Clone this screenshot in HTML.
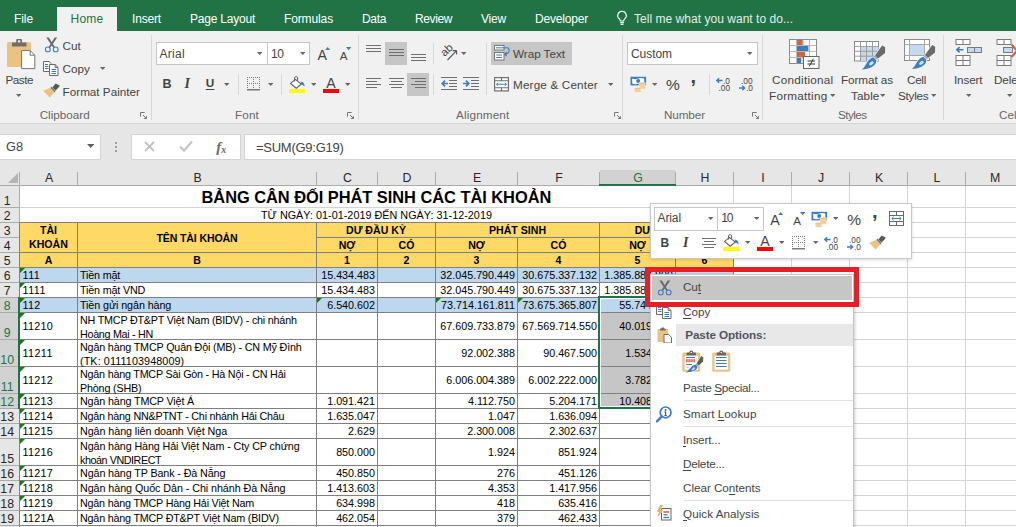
<!DOCTYPE html>
<html><head><meta charset="utf-8"><title>Excel</title>
<style>
html,body{margin:0;padding:0;}
body{width:1016px;height:527px;overflow:hidden;position:relative;background:#fff;font-family:"Liberation Sans",sans-serif;}
.t{position:absolute;white-space:nowrap;}
.r{position:absolute;}
u{text-decoration:underline;text-underline-offset:1.6px;}
</style></head><body>
<div class="r" style="left:0.00px;top:0.00px;width:1016.00px;height:31.00px;background:#217346;"></div>
<div class="r" style="left:0.00px;top:31.00px;width:1016.00px;height:92.00px;background:#f1f1f1;"></div>
<div class="r" style="left:0.00px;top:123.00px;width:1016.00px;height:1.00px;background:#d5d5d5;"></div>
<div class="r" style="left:0.00px;top:124.00px;width:1016.00px;height:46.00px;background:#e6e6e6;"></div>
<div class="r" style="left:57.00px;top:7.00px;width:60.00px;height:25.00px;background:#f1f1f1;"></div>
<div class="t" style="left:14.00px;top:12.84px;font-size:12.00px;line-height:1;color:#fff;letter-spacing:-0.084px;">File</div>
<div class="t" style="left:70.50px;top:12.84px;font-size:12.00px;line-height:1;color:#217346;letter-spacing:0.248px;">Home</div>
<div class="t" style="left:132.00px;top:12.84px;font-size:12.00px;line-height:1;color:#fff;letter-spacing:-0.168px;">Insert</div>
<div class="t" style="left:190.00px;top:12.84px;font-size:12.00px;line-height:1;color:#fff;letter-spacing:-0.217px;">Page Layout</div>
<div class="t" style="left:284.00px;top:12.84px;font-size:12.00px;line-height:1;color:#fff;letter-spacing:-0.126px;">Formulas</div>
<div class="t" style="left:362.00px;top:12.84px;font-size:12.00px;line-height:1;color:#fff;letter-spacing:-0.337px;">Data</div>
<div class="t" style="left:415.00px;top:12.84px;font-size:12.00px;line-height:1;color:#fff;letter-spacing:-0.391px;">Review</div>
<div class="t" style="left:481.00px;top:12.84px;font-size:12.00px;line-height:1;color:#fff;letter-spacing:-0.198px;">View</div>
<div class="t" style="left:535.00px;top:12.84px;font-size:12.00px;line-height:1;color:#fff;letter-spacing:-0.188px;">Developer</div>
<div class="t" style="left:634.00px;top:12.84px;font-size:12.00px;line-height:1;color:#e3eee8;letter-spacing:0.031px;">Tell me what you want to do...</div>
<svg class="r" style="left:616.00px;top:10.00px;" width="12" height="17" viewBox="0 0 12 17"><path d="M6 1.2a4.3 4.3 0 0 0-2.6 7.7c.6.6.9 1.3.9 2.1h3.4c0-.8.3-1.5.9-2.1A4.3 4.3 0 0 0 6 1.2z" fill="none" stroke="#fff" stroke-width="1.1"/><path d="M4.2 12.6h3.6M4.6 14.4h2.8" stroke="#fff" stroke-width="1.1"/></svg>
<svg class="r" style="left:6.00px;top:38.00px;" width="30" height="32" viewBox="0 0 30 32"><rect x="1" y="4" width="24" height="25" rx="1.6" fill="#eac282"/>
<path d="M6 8.4V5.2a.8.8 0 0 1 .8-.8h3.4V2a.9.9 0 0 1 .9-.9h4a.9.9 0 0 1 .9.9v2.4h3.7a.8.8 0 0 1 .8.8v3.2z" fill="#6e6e6e"/><rect x="12" y="2.4" width="2.3" height="2" fill="#f4f4f4"/>
<path d="M15.6 12.6h8.6l4.6 4.6v13.4H15.6z" fill="#fff" stroke="#757575" stroke-width="1"/><path d="M24.2 12.6v4.6h4.6" fill="none" stroke="#757575" stroke-width="1"/></svg>
<div class="t" style="left:5.40px;top:73.60px;font-size:11.70px;line-height:1;color:#444;letter-spacing:-0.463px;">Paste</div>
<svg class="r" style="left:15.85px;top:93.50px;" width="5.5" height="3" viewBox="0 0 5.5 3"><path d="M0 0H5.5 L2.75 3Z" fill="#666"/></svg>
<svg class="r" style="left:43.50px;top:37.00px;" width="15.5" height="16" viewBox="0 0 15.5 16"><path d="M2.3 .5H4.9L8.6 6.6L10.9 10.1L9.6 10.9L7 7.6z" fill="#6b6b6b"/><path d="M13.2 .5H10.6L6.9 6.6L4.6 10.1L5.9 10.9L8.5 7.6z" fill="#6b6b6b"/>
<circle cx="3.8" cy="12.4" r="2.4" fill="none" stroke="#3b7dc4" stroke-width="1.1"/><circle cx="11.7" cy="12.4" r="2.4" fill="none" stroke="#3b7dc4" stroke-width="1.1"/></svg>
<div class="t" style="left:62.60px;top:39.70px;font-size:11.70px;line-height:1;color:#444;letter-spacing:-0.069px;">Cut</div>
<svg class="r" style="left:42.80px;top:60.50px;" width="16" height="15" viewBox="0 0 16 15"><path d="M0.5 0.5h5.6l2.4 2.4v7.6h-8z" fill="#fff" stroke="#6a6a6a" stroke-width="1"/>
<path d="M2 3.5h3M2 5.5h3.5M2 7.5h3.5" stroke="#3b7dc4" stroke-width="1"/>
<path d="M6.5 3.5h5.6l2.9 2.9v8.1h-8.5z" fill="#fff" stroke="#6a6a6a" stroke-width="1"/><path d="M12.1 3.5v2.9h2.9" fill="none" stroke="#6a6a6a" stroke-width="1"/>
<path d="M8.5 8.5h4.5M8.5 10.5h4.5M8.5 12.5h4.5" stroke="#3b7dc4" stroke-width="1"/></svg>
<div class="t" style="left:62.60px;top:62.90px;font-size:11.70px;line-height:1;color:#444;letter-spacing:-0.028px;">Copy</div>
<svg class="r" style="left:99.65px;top:66.80px;" width="5.5" height="3" viewBox="0 0 5.5 3"><path d="M0 0H5.5 L2.75 3Z" fill="#666"/></svg>
<svg class="r" style="left:43.00px;top:83.30px;" width="17" height="15" viewBox="0 0 17 15"><path d="M12.6 .6L16.6 2.4L16.2 3.8L12.6 7.6L9.4 4.4z" fill="#595959"/>
<path d="M8.6 3.6L12.8 8L11.4 9.4L7.2 5z" fill="#7e7e7e"/>
<path d="M7 5L11.2 9.4L6.7 14.4L0.2 7.7z" fill="#eac282"/></svg>
<div class="t" style="left:62.60px;top:85.50px;font-size:11.70px;line-height:1;color:#444;letter-spacing:0.002px;">Format Painter</div>
<div class="t" style="left:39.70px;top:108.70px;font-size:11.70px;line-height:1;color:#666;letter-spacing:-0.008px;">Clipboard</div>
<svg class="r" style="left:140.00px;top:111.80px;" width="8" height="8" viewBox="0 0 8 8"><path d="M0.5 4.6V0.5H4.6" fill="none" stroke="#777" stroke-width="1"/><path d="M3 3L6.3 6.3" fill="none" stroke="#777" stroke-width="1"/><path d="M6.9 3.6V6.9H3.6z" fill="#777"/></svg>
<div class="r" style="left:151.00px;top:35.00px;width:1.00px;height:85.00px;background:#d8d8d8;"></div>
<div class="r" style="left:156.00px;top:42.00px;width:111.50px;height:23.00px;background:#fff;box-sizing:border-box;border:1px solid #c6c6c6;"></div>
<div class="r" style="left:266.50px;top:42.00px;width:43.00px;height:23.00px;background:#fff;box-sizing:border-box;border:1px solid #c6c6c6;"></div>
<div class="t" style="left:159.50px;top:48.14px;font-size:12.00px;line-height:1;color:#444;letter-spacing:0.299px;">Arial</div>
<div class="t" style="left:271.00px;top:48.14px;font-size:12.00px;line-height:1;color:#444;letter-spacing:-0.423px;">10</div>
<svg class="r" style="left:256.75px;top:52.30px;" width="5.5" height="3" viewBox="0 0 5.5 3"><path d="M0 0H5.5 L2.75 3Z" fill="#666"/></svg>
<svg class="r" style="left:299.75px;top:52.30px;" width="5.5" height="3" viewBox="0 0 5.5 3"><path d="M0 0H5.5 L2.75 3Z" fill="#666"/></svg>
<div class="t" style="left:317.50px;top:47.98px;font-size:14.20px;line-height:1;color:#444;">A</div>
<svg class="r" style="left:325.10px;top:47.00px;" width="5.4" height="3.2" viewBox="0 0 5.4 3.2"><path d="M0 3.2L2.7 0L5.4 3.2z" fill="#3b7dc4"/></svg>
<div class="t" style="left:339.80px;top:50.18px;font-size:11.60px;line-height:1;color:#444;">A</div>
<svg class="r" style="left:346.40px;top:47.00px;" width="5.4" height="3.2" viewBox="0 0 5.4 3.2"><path d="M0 0H5.4L2.7 3.2z" fill="#3b7dc4"/></svg>
<div class="t" style="left:162.50px;top:78.42px;font-size:12.50px;line-height:1;color:#444;font-weight:bold;">B</div>
<div class="t" style="left:184.50px;top:77.15px;font-size:14.00px;line-height:1;color:#444;font-weight:bold;font-style:italic;font-family:'Liberation Serif',serif;">I</div>
<div class="t" style="left:205.80px;top:78.31px;font-size:11.80px;line-height:1;color:#444;font-weight:bold;text-decoration:underline;text-underline-offset:1.5px;">U</div>
<svg class="r" style="left:224.25px;top:83.00px;" width="5.5" height="3" viewBox="0 0 5.5 3"><path d="M0 0H5.5 L2.75 3Z" fill="#666"/></svg>
<div class="r" style="left:238.00px;top:74.00px;width:1.00px;height:21.00px;background:#d8d8d8;"></div>
<svg class="r" style="left:246.70px;top:77.00px;" width="14" height="14" viewBox="0 0 14 14"><path d="M0 0.5H13M0 6.5H13M0.5 0V12M6.5 0V12M12.5 0V12" stroke="#7a7a7a" stroke-width="1" stroke-dasharray="1 1"/><path d="M0 12.8H13" stroke="#5a5a5a" stroke-width="1.2"/></svg>
<svg class="r" style="left:267.75px;top:83.00px;" width="5.5" height="3" viewBox="0 0 5.5 3"><path d="M0 0H5.5 L2.75 3Z" fill="#666"/></svg>
<div class="r" style="left:281.00px;top:74.00px;width:1.00px;height:21.00px;background:#d8d8d8;"></div>
<svg class="r" style="left:289.00px;top:75.50px;" width="17" height="17" viewBox="0 0 17 17"><path d="M6.4 3.4L12.2 8.2L7.2 12.2L1.6 7.4z" fill="#fff" stroke="#5f5f5f" stroke-width="1.1"/>
<path d="M5.6 5.6V1.8a1.1 1.1 0 0 1 1.1-1.1h.8a1.1 1.1 0 0 1 1.1 1.1v3.2" fill="none" stroke="#5f5f5f" stroke-width="1"/>
<path d="M11.6 5.4c2.6.2 4.3 2 3.9 5.2c-1-1.2-2-1.8-3.3-2z" fill="#3b7dc4"/>
<rect x="0" y="13" width="16" height="4" fill="#ffff00"/></svg>
<svg class="r" style="left:310.55px;top:83.00px;" width="5.5" height="3" viewBox="0 0 5.5 3"><path d="M0 0H5.5 L2.75 3Z" fill="#666"/></svg>
<div class="t" style="left:326.20px;top:76.28px;font-size:14.20px;line-height:1;color:#444;">A</div>
<div class="r" style="left:323.00px;top:88.50px;width:16.00px;height:4.00px;background:#ff0000;"></div>
<svg class="r" style="left:344.55px;top:83.00px;" width="5.5" height="3" viewBox="0 0 5.5 3"><path d="M0 0H5.5 L2.75 3Z" fill="#666"/></svg>
<div class="t" style="left:235.00px;top:108.70px;font-size:11.70px;line-height:1;color:#666;letter-spacing:0.148px;">Font</div>
<svg class="r" style="left:346.50px;top:111.80px;" width="8" height="8" viewBox="0 0 8 8"><path d="M0.5 4.6V0.5H4.6" fill="none" stroke="#777" stroke-width="1"/><path d="M3 3L6.3 6.3" fill="none" stroke="#777" stroke-width="1"/><path d="M6.9 3.6V6.9H3.6z" fill="#777"/></svg>
<div class="r" style="left:358.00px;top:35.00px;width:1.00px;height:85.00px;background:#d8d8d8;"></div>
<div class="r" style="left:385.00px;top:42.00px;width:22.00px;height:23.00px;background:#c6c6c6;"></div>
<svg class="r" style="left:366.00px;top:45.00px;" width="15" height="9" viewBox="0 0 15 9"><rect x="0" y="0" width="15" height="1" fill="#6e6e6e"/><rect x="0" y="3" width="15" height="1" fill="#6e6e6e"/><rect x="0" y="6" width="15" height="1" fill="#6e6e6e"/></svg>
<svg class="r" style="left:389.00px;top:49.00px;" width="15" height="9" viewBox="0 0 15 9"><rect x="0" y="0" width="15" height="1" fill="#6e6e6e"/><rect x="0" y="3" width="15" height="1" fill="#6e6e6e"/><rect x="0" y="6" width="15" height="1" fill="#6e6e6e"/></svg>
<svg class="r" style="left:410.50px;top:54.00px;" width="15" height="9" viewBox="0 0 15 9"><rect x="0" y="0" width="15" height="1" fill="#6e6e6e"/><rect x="0" y="3" width="15" height="1" fill="#6e6e6e"/><rect x="0" y="6" width="15" height="1" fill="#6e6e6e"/></svg>
<div class="r" style="left:433.00px;top:43.00px;width:1.00px;height:21.00px;background:#d8d8d8;"></div>
<svg class="r" style="left:440.00px;top:43.00px;" width="19" height="19" viewBox="0 0 19 19"><text x="0" y="0" font-size="11.3" fill="#444" transform="translate(4.4 14) rotate(-42)" font-family="Liberation Sans">ab</text><path d="M7.5 17L16.6 7.6M16.6 7.6H12.8M16.6 7.6V11.4" stroke="#555" stroke-width="1.1" fill="none"/></svg>
<svg class="r" style="left:461.05px;top:52.30px;" width="5.5" height="3" viewBox="0 0 5.5 3"><path d="M0 0H5.5 L2.75 3Z" fill="#666"/></svg>
<div class="r" style="left:407.00px;top:73.00px;width:22.00px;height:22.50px;background:#c6c6c6;"></div>
<svg class="r" style="left:366.00px;top:78.00px;" width="15" height="12" viewBox="0 0 15 12"><rect x="0" y="0" width="15" height="1" fill="#6e6e6e"/><rect x="0" y="3" width="11" height="1" fill="#6e6e6e"/><rect x="0" y="6" width="15" height="1" fill="#6e6e6e"/><rect x="0" y="9" width="11" height="1" fill="#6e6e6e"/></svg>
<svg class="r" style="left:389.00px;top:78.00px;" width="15" height="12" viewBox="0 0 15 12"><rect x="0" y="0" width="15" height="1" fill="#6e6e6e"/><rect x="2" y="3" width="11" height="1" fill="#6e6e6e"/><rect x="0" y="6" width="15" height="1" fill="#6e6e6e"/><rect x="2" y="9" width="11" height="1" fill="#6e6e6e"/></svg>
<svg class="r" style="left:411.00px;top:78.00px;" width="15" height="12" viewBox="0 0 15 12"><rect x="0" y="0" width="15" height="1" fill="#6e6e6e"/><rect x="4" y="3" width="11" height="1" fill="#6e6e6e"/><rect x="0" y="6" width="15" height="1" fill="#6e6e6e"/><rect x="4" y="9" width="11" height="1" fill="#6e6e6e"/></svg>
<div class="r" style="left:433.00px;top:74.00px;width:1.00px;height:21.00px;background:#d8d8d8;"></div>
<svg class="r" style="left:441.00px;top:77.00px;" width="16" height="13" viewBox="0 0 16 13"><path d="M0 0.5H16M8 3.5H16M8 6.5H16M8 9.5H16M0 12.5H16" stroke="#6e6e6e" stroke-width="1"/><path d="M7 6.5H1.6M4 3.6L1.2 6.5L4 9.4" stroke="#3b7dc4" stroke-width="1.7" fill="none"/></svg>
<svg class="r" style="left:463.00px;top:77.00px;" width="16" height="13" viewBox="0 0 16 13"><path d="M0 0.5H16M8 3.5H16M8 6.5H16M8 9.5H16M0 12.5H16" stroke="#6e6e6e" stroke-width="1"/><path d="M0 6.5H5.4M3 3.6L5.8 6.5L3 9.4" stroke="#3b7dc4" stroke-width="1.7" fill="none"/></svg>
<div class="r" style="left:486.00px;top:43.00px;width:1.00px;height:52.00px;background:#d8d8d8;"></div>
<div class="r" style="left:491.00px;top:42.00px;width:81.00px;height:23.00px;background:#c6c6c6;"></div>
<svg class="r" style="left:494.00px;top:44.50px;" width="16" height="16" viewBox="0 0 16 16"><rect x="0.5" y="0.5" width="9.5" height="4.5" fill="#fff" stroke="#777"/><rect x="0.5" y="7.5" width="9.5" height="7.5" fill="#fff" stroke="#777"/><path d="M2 2.8H14" stroke="#3b7dc4" stroke-width="1"/><path d="M2.3 10H8M2.3 12.5H8" stroke="#3b7dc4" stroke-width="1"/><path d="M14 2.8c1.4 1 1.6 3.6 0 5.2c-.8.8-2 1.2-3.4 1.2M12.6 7.2L10.6 9.2L12.6 11.2" fill="none" stroke="#3b7dc4" stroke-width="1.1"/></svg>
<div class="t" style="left:513.00px;top:48.40px;font-size:11.70px;line-height:1;color:#444;letter-spacing:-0.026px;">Wrap Text</div>
<svg class="r" style="left:494.00px;top:76.50px;" width="15" height="15" viewBox="0 0 15 15"><rect x="0.6" y="0.6" width="13.8" height="13.3" fill="#fff" stroke="#707070" stroke-width="1.2"/><path d="M0.5 3.8H14.5M0.5 10.7H14.5M7.5 0.5V3.8M7.5 10.7V14" stroke="#707070" stroke-width="1.1"/><path d="M2.6 7.25H12.4M4.2 5.6L2.5 7.25L4.2 8.9M10.8 5.6L12.5 7.25L10.8 8.9" stroke="#3b7dc4" stroke-width="1" fill="none"/></svg>
<div class="t" style="left:513.00px;top:79.10px;font-size:11.70px;line-height:1;color:#444;letter-spacing:0.173px;">Merge &amp; Center</div>
<svg class="r" style="left:607.75px;top:83.00px;" width="5.5" height="3" viewBox="0 0 5.5 3"><path d="M0 0H5.5 L2.75 3Z" fill="#666"/></svg>
<div class="t" style="left:456.00px;top:108.70px;font-size:11.70px;line-height:1;color:#666;letter-spacing:0.164px;">Alignment</div>
<svg class="r" style="left:613.50px;top:111.80px;" width="8" height="8" viewBox="0 0 8 8"><path d="M0.5 4.6V0.5H4.6" fill="none" stroke="#777" stroke-width="1"/><path d="M3 3L6.3 6.3" fill="none" stroke="#777" stroke-width="1"/><path d="M6.9 3.6V6.9H3.6z" fill="#777"/></svg>
<div class="r" style="left:622.00px;top:35.00px;width:1.00px;height:85.00px;background:#d8d8d8;"></div>
<div class="r" style="left:627.00px;top:42.00px;width:130.50px;height:23.00px;background:#fff;box-sizing:border-box;border:1px solid #c6c6c6;"></div>
<div class="t" style="left:631.00px;top:48.14px;font-size:12.00px;line-height:1;color:#444;letter-spacing:-0.057px;">Custom</div>
<svg class="r" style="left:747.25px;top:52.30px;" width="5.5" height="3" viewBox="0 0 5.5 3"><path d="M0 0H5.5 L2.75 3Z" fill="#666"/></svg>
<svg class="r" style="left:629.50px;top:75.50px;" width="17" height="17" viewBox="0 0 17 17"><rect x="0.5" y="0.8" width="15.6" height="8.6" fill="#3b7dc4"/><path d="M2.2 2.6c2 .9 4 .9 6 0s4-.9 6 0v5c-2-.9-4-.9-6 0s-4 .9-6 0z" fill="#fff"/><circle cx="8.2" cy="5.1" r="2" fill="#3b7dc4"/>
<g fill="#eac282" stroke="#fff" stroke-width=".5"><ellipse cx="12.2" cy="11.6" rx="3.6" ry="1.5"/><ellipse cx="12.2" cy="9.6" rx="3.6" ry="1.5"/><ellipse cx="12.2" cy="7.6" rx="3.6" ry="1.5"/><ellipse cx="7.6" cy="14.8" rx="3.6" ry="1.5"/><ellipse cx="7.6" cy="12.8" rx="3.6" ry="1.5"/></g></svg>
<svg class="r" style="left:651.75px;top:83.00px;" width="5.5" height="3" viewBox="0 0 5.5 3"><path d="M0 0H5.5 L2.75 3Z" fill="#666"/></svg>
<div class="t" style="left:666.00px;top:76.88px;font-size:15.50px;line-height:1;color:#444;">%</div>
<div class="t" style="left:690.50px;top:66.27px;font-size:20.00px;line-height:1;color:#444;font-weight:bold;">,</div>
<div class="r" style="left:709.00px;top:74.00px;width:1.00px;height:21.00px;background:#d8d8d8;"></div>
<svg class="r" style="left:716.00px;top:77.00px;" width="16" height="15" viewBox="0 0 16 15"><path d="M6.5 3.5H1M3.2 1.2L0.8 3.5L3.2 5.8" stroke="#3b7dc4" stroke-width="1.3" fill="none"/><text x="7" y="6.5" font-size="8.3" fill="#444" font-family="Liberation Sans">.0</text><text x="2.5" y="13.8" font-size="8.3" fill="#444" font-family="Liberation Sans">.00</text></svg>
<svg class="r" style="left:738.00px;top:77.00px;" width="16" height="15" viewBox="0 0 16 15"><path d="M1 11H6.5M4.3 8.7L6.7 11L4.3 13.3" stroke="#3b7dc4" stroke-width="1.3" fill="none"/><text x="3" y="6.5" font-size="8.3" fill="#444" font-family="Liberation Sans">.00</text><text x="8" y="13.8" font-size="8.3" fill="#444" font-family="Liberation Sans">.0</text></svg>
<div class="t" style="left:664.00px;top:108.70px;font-size:11.70px;line-height:1;color:#666;letter-spacing:-0.102px;">Number</div>
<svg class="r" style="left:751.50px;top:111.80px;" width="8" height="8" viewBox="0 0 8 8"><path d="M0.5 4.6V0.5H4.6" fill="none" stroke="#777" stroke-width="1"/><path d="M3 3L6.3 6.3" fill="none" stroke="#777" stroke-width="1"/><path d="M6.9 3.6V6.9H3.6z" fill="#777"/></svg>
<div class="r" style="left:762.00px;top:35.00px;width:1.00px;height:85.00px;background:#d8d8d8;"></div>
<svg class="r" style="left:789.00px;top:38.00px;" width="31" height="32" viewBox="0 0 31 32"><rect x="0.5" y="1.5" width="27" height="24" fill="#fff" stroke="#8a8a8a"/>
<path d="M0.5 7.5H27.5M0.5 13.5H27.5M0.5 19.5H27.5M7.5 1.5V25.5M20.5 1.5V25.5M14 1.5V25.5" stroke="#b8b8b8" stroke-width="1"/>
<rect x="8" y="2" width="5.6" height="5" fill="#d8623c"/><rect x="8" y="8" width="11.4" height="5" fill="#3b7dc4"/><rect x="8" y="14" width="8" height="5" fill="#d8623c"/><rect x="8" y="20" width="4.2" height="5" fill="#3b7dc4"/>
<rect x="14.5" y="18.5" width="15.5" height="12" fill="#fff" stroke="#666"/><path d="M18.5 23H26M18.5 26H26M24.4 20.8L20.2 28.4" stroke="#333" stroke-width="1"/></svg>
<div class="t" style="left:772.00px;top:74.10px;font-size:11.70px;line-height:1;color:#444;letter-spacing:0.269px;">Conditional</div>
<div class="t" style="left:769.00px;top:90.10px;font-size:11.70px;line-height:1;color:#444;letter-spacing:0.259px;">Formatting</div>
<svg class="r" style="left:829.75px;top:94.00px;" width="5.5" height="3" viewBox="0 0 5.5 3"><path d="M0 0H5.5 L2.75 3Z" fill="#666"/></svg>
<svg class="r" style="left:853.50px;top:41.00px;" width="32" height="30" viewBox="0 0 32 30"><rect x="0.5" y="0.5" width="24" height="19.5" fill="#fff" stroke="#8a8a8a"/>
<rect x="6.5" y="5.4" width="18" height="14.6" fill="#c5d9f1"/>
<path d="M0.5 5.4H24.5M0.5 10.3H24.5M0.5 15.2H24.5M6.5 0.5V20M12.5 0.5V20M18.5 0.5V20" stroke="#9c9c9c" stroke-width="1"/><g transform="translate(8 5)"><path d="M20.2 -0.4L23.2 1.2L23 7L16 12.6L13 9.6z" fill="#6a6a6a" stroke="#f1f1f1" stroke-width="1.6" paint-order="stroke"/><path d="M13 9.6L16 12.6L14.3 14.3L11.3 11.3z" fill="#a2a2a2"/>
<path d="M11.3 11.3L14.3 14.3C14.5 20.5 7 23.2 0 23.4C4.5 20.5 4.5 13.5 11.3 11.3z" fill="#3b7dc4" stroke="#f1f1f1" stroke-width="1.6" paint-order="stroke"/><ellipse cx="9.4" cy="17.4" rx="2.7" ry="1.5" transform="rotate(-38 9.4 17.4)" fill="#d3e3f5"/></g></svg>
<div class="t" style="left:841.00px;top:74.10px;font-size:11.70px;line-height:1;color:#444;letter-spacing:-0.073px;">Format as</div>
<div class="t" style="left:851.00px;top:90.10px;font-size:11.70px;line-height:1;color:#444;letter-spacing:0.106px;">Table</div>
<svg class="r" style="left:879.75px;top:94.00px;" width="5.5" height="3" viewBox="0 0 5.5 3"><path d="M0 0H5.5 L2.75 3Z" fill="#666"/></svg>
<svg class="r" style="left:904.00px;top:39.00px;" width="32" height="32" viewBox="0 0 32 32"><rect x="0.5" y="0.5" width="25" height="21" fill="#fff" stroke="#8a8a8a"/>
<path d="M0.5 5.5H25.5M0.5 16.5H25.5M5.5 0.5V21.5M20.5 0.5V21.5" stroke="#a8a8a8" stroke-width="1"/>
<rect x="6" y="6" width="14" height="10" fill="#c5d9f1"/><g transform="translate(8 6.5)"><path d="M20.2 -0.4L23.2 1.2L23 7L16 12.6L13 9.6z" fill="#6a6a6a" stroke="#f1f1f1" stroke-width="1.6" paint-order="stroke"/><path d="M13 9.6L16 12.6L14.3 14.3L11.3 11.3z" fill="#a2a2a2"/>
<path d="M11.3 11.3L14.3 14.3C14.5 20.5 7 23.2 0 23.4C4.5 20.5 4.5 13.5 11.3 11.3z" fill="#3b7dc4" stroke="#f1f1f1" stroke-width="1.6" paint-order="stroke"/><ellipse cx="9.4" cy="17.4" rx="2.7" ry="1.5" transform="rotate(-38 9.4 17.4)" fill="#d3e3f5"/></g></svg>
<div class="t" style="left:907.00px;top:74.10px;font-size:11.70px;line-height:1;color:#444;letter-spacing:-0.289px;">Cell</div>
<div class="t" style="left:898.00px;top:90.10px;font-size:11.70px;line-height:1;color:#444;letter-spacing:-0.227px;">Styles</div>
<svg class="r" style="left:930.75px;top:94.00px;" width="5.5" height="3" viewBox="0 0 5.5 3"><path d="M0 0H5.5 L2.75 3Z" fill="#666"/></svg>
<div class="t" style="left:838.00px;top:108.70px;font-size:11.70px;line-height:1;color:#666;letter-spacing:-0.560px;">Styles</div>
<div class="r" style="left:943.00px;top:35.00px;width:1.00px;height:85.00px;background:#d8d8d8;"></div>
<svg class="r" style="left:955.00px;top:38.00px;" width="28" height="30" viewBox="0 0 28 30"><rect x="1" y="1.5" width="14" height="5" fill="#fff" stroke="#7a7a7a"/><path d="M8 1.5V6.5" stroke="#7a7a7a"/><rect x="12.5" y="9.5" width="14" height="5" fill="#c5d9f1" stroke="#7a7a7a"/><path d="M19.5 9.5V14.5" stroke="#7a7a7a"/><rect x="1" y="17.5" width="14" height="10" fill="#fff" stroke="#7a7a7a"/><path d="M8 17.5V27.5" stroke="#7a7a7a"/><path d="M1 22.5H15" stroke="#7a7a7a"/><path d="M8.5 11.8H2M4.6 9.2L1.8 11.8L4.6 14.4" stroke="#3b7dc4" stroke-width="1.6" fill="none"/></svg>
<div class="t" style="left:954.00px;top:74.10px;font-size:11.70px;line-height:1;color:#444;letter-spacing:-0.127px;">Insert</div>
<svg class="r" style="left:965.55px;top:94.00px;" width="5.5" height="3" viewBox="0 0 5.5 3"><path d="M0 0H5.5 L2.75 3Z" fill="#666"/></svg>
<svg class="r" style="left:996.00px;top:38.00px;" width="28" height="30" viewBox="0 0 28 30"><rect x="1" y="1.5" width="14" height="5" fill="#fff" stroke="#7a7a7a"/><path d="M8 1.5V6.5" stroke="#7a7a7a"/><rect x="7.5" y="9.5" width="9" height="5" fill="#c5d9f1" stroke="#7a7a7a"/><rect x="1" y="17.5" width="14" height="10" fill="#fff" stroke="#7a7a7a"/><path d="M8 17.5V27.5" stroke="#7a7a7a"/><path d="M1 22.5H15" stroke="#7a7a7a"/><path d="M15.5 6.5L26.5 19M26.5 6.5L15.5 19" stroke="#d8623c" stroke-width="2.2" fill="none"/></svg>
<div class="t" style="left:994.00px;top:74.10px;font-size:11.70px;line-height:1;color:#444;letter-spacing:-0.136px;">Delete</div>
<svg class="r" style="left:1006.75px;top:94.00px;" width="5.5" height="3" viewBox="0 0 5.5 3"><path d="M0 0H5.5 L2.75 3Z" fill="#666"/></svg>
<div class="t" style="left:999.00px;top:108.70px;font-size:11.70px;line-height:1;color:#666;letter-spacing:-0.001px;">Cells</div>
<div class="r" style="left:-1.00px;top:134.00px;width:102.00px;height:25.50px;background:#fff;box-sizing:border-box;border:1px solid #d4d4d4;"></div>
<div class="t" style="left:6.00px;top:141.16px;font-size:12.80px;line-height:1;color:#444;">G8</div>
<svg class="r" style="left:86.60px;top:143.60px;" width="7.4" height="4" viewBox="0 0 7.4 4"><path d="M0 0H7.4 L3.7 4Z" fill="#606060"/></svg>
<div class="r" style="left:115.00px;top:141.70px;width:1.90px;height:1.90px;background:#9e9e9e;"></div>
<div class="r" style="left:115.00px;top:145.80px;width:1.90px;height:1.90px;background:#9e9e9e;"></div>
<div class="r" style="left:115.00px;top:149.90px;width:1.90px;height:1.90px;background:#9e9e9e;"></div>
<div class="r" style="left:131.00px;top:134.00px;width:109.50px;height:25.50px;background:#fff;box-sizing:border-box;border:1px solid #d4d4d4;"></div>
<svg class="r" style="left:144.00px;top:141.00px;" width="11" height="11" viewBox="0 0 11 11"><path d="M1 1L10 10M10 1L1 10" stroke="#c2c2c2" stroke-width="1.8"/></svg>
<svg class="r" style="left:179.00px;top:140.00px;" width="14" height="12" viewBox="0 0 14 12"><path d="M1 6.6L5 10.6L13 1.5" stroke="#c6c6c6" stroke-width="2.2" fill="none"/></svg>
<div class="t" style="left:216.30px;top:139.80px;font-size:15.00px;line-height:1;color:#686868;font-weight:bold;font-style:italic;font-family:'Liberation Serif',serif;">f</div>
<div class="t" style="left:221.30px;top:144.53px;font-size:10.00px;line-height:1;color:#686868;font-weight:bold;font-style:italic;font-family:'Liberation Serif',serif;">x</div>
<div class="r" style="left:244.00px;top:134.00px;width:780.00px;height:25.50px;background:#fff;box-sizing:border-box;border:1px solid #d4d4d4;"></div>
<div class="t" style="left:256.00px;top:141.30px;font-size:13.00px;line-height:1;color:#444;letter-spacing:-0.263px;">=SUM(G9:G19)</div>
<div class="r" style="left:0.00px;top:170.00px;width:1016.00px;height:16.00px;background:#e6e6e6;"></div>
<div class="r" style="left:0.00px;top:185.00px;width:1016.00px;height:1.00px;background:#ababab;"></div>
<svg class="r" style="left:8.00px;top:173.00px;" width="10" height="10" viewBox="0 0 10 10"><path d="M10 0V10H0Z" fill="#b4b4b4"/></svg>
<div class="r" style="left:19.00px;top:172.00px;width:1.00px;height:14.00px;background:#ababab;"></div>
<div class="r" style="left:77.00px;top:172.00px;width:1.00px;height:14.00px;background:#ababab;"></div>
<div class="r" style="left:316.00px;top:172.00px;width:1.00px;height:14.00px;background:#ababab;"></div>
<div class="r" style="left:377.00px;top:172.00px;width:1.00px;height:14.00px;background:#ababab;"></div>
<div class="r" style="left:435.00px;top:172.00px;width:1.00px;height:14.00px;background:#ababab;"></div>
<div class="r" style="left:517.00px;top:172.00px;width:1.00px;height:14.00px;background:#ababab;"></div>
<div class="r" style="left:599.00px;top:172.00px;width:1.00px;height:14.00px;background:#ababab;"></div>
<div class="r" style="left:675.00px;top:172.00px;width:1.00px;height:14.00px;background:#ababab;"></div>
<div class="r" style="left:733.00px;top:172.00px;width:1.00px;height:14.00px;background:#ababab;"></div>
<div class="r" style="left:791.00px;top:172.00px;width:1.00px;height:14.00px;background:#ababab;"></div>
<div class="r" style="left:849.00px;top:172.00px;width:1.00px;height:14.00px;background:#ababab;"></div>
<div class="r" style="left:907.00px;top:172.00px;width:1.00px;height:14.00px;background:#ababab;"></div>
<div class="r" style="left:965.00px;top:172.00px;width:1.00px;height:14.00px;background:#ababab;"></div>
<div class="r" style="left:600.00px;top:170.00px;width:75.00px;height:15.00px;background:#d2d2d2;"></div>
<div class="r" style="left:599.00px;top:184.00px;width:77.00px;height:2.00px;background:#217346;"></div>
<div class="t" style="left:44.90px;top:171.59px;font-size:12.30px;line-height:1;color:#262626;">A</div>
<div class="t" style="left:193.40px;top:171.59px;font-size:12.30px;line-height:1;color:#262626;">B</div>
<div class="t" style="left:343.06px;top:171.59px;font-size:12.30px;line-height:1;color:#262626;">C</div>
<div class="t" style="left:402.56px;top:171.59px;font-size:12.30px;line-height:1;color:#262626;">D</div>
<div class="t" style="left:472.90px;top:171.59px;font-size:12.30px;line-height:1;color:#262626;">E</div>
<div class="t" style="left:555.24px;top:171.59px;font-size:12.30px;line-height:1;color:#262626;">F</div>
<div class="t" style="left:633.22px;top:171.59px;font-size:12.30px;line-height:1;color:#217346;">G</div>
<div class="t" style="left:700.56px;top:171.59px;font-size:12.30px;line-height:1;color:#262626;">H</div>
<div class="t" style="left:761.29px;top:171.59px;font-size:12.30px;line-height:1;color:#262626;">I</div>
<div class="t" style="left:817.92px;top:171.59px;font-size:12.30px;line-height:1;color:#262626;">J</div>
<div class="t" style="left:874.90px;top:171.59px;font-size:12.30px;line-height:1;color:#262626;">K</div>
<div class="t" style="left:933.58px;top:171.59px;font-size:12.30px;line-height:1;color:#262626;">L</div>
<div class="t" style="left:989.88px;top:171.59px;font-size:12.30px;line-height:1;color:#262626;">M</div>
<div class="r" style="left:0.00px;top:186.00px;width:19.00px;height:341.00px;background:#e6e6e6;"></div>
<div class="r" style="left:19.00px;top:186.00px;width:1.00px;height:341.00px;background:#ababab;"></div>
<div class="r" style="left:0.00px;top:298.00px;width:19.00px;height:110.00px;background:#d2d2d2;"></div>
<div class="r" style="left:0.00px;top:207.00px;width:19.00px;height:1.00px;background:#ababab;"></div>
<div class="t" style="left:3.78px;top:195.39px;font-size:12.30px;line-height:1;color:#262626;">1</div>
<div class="r" style="left:0.00px;top:222.00px;width:19.00px;height:1.00px;background:#ababab;"></div>
<div class="t" style="left:3.78px;top:210.39px;font-size:12.30px;line-height:1;color:#262626;">2</div>
<div class="r" style="left:0.00px;top:237.00px;width:19.00px;height:1.00px;background:#ababab;"></div>
<div class="t" style="left:3.78px;top:225.39px;font-size:12.30px;line-height:1;color:#262626;">3</div>
<div class="r" style="left:0.00px;top:252.00px;width:19.00px;height:1.00px;background:#ababab;"></div>
<div class="t" style="left:3.78px;top:240.39px;font-size:12.30px;line-height:1;color:#262626;">4</div>
<div class="r" style="left:0.00px;top:267.00px;width:19.00px;height:1.00px;background:#ababab;"></div>
<div class="t" style="left:3.78px;top:255.39px;font-size:12.30px;line-height:1;color:#262626;">5</div>
<div class="r" style="left:0.00px;top:282.00px;width:19.00px;height:1.00px;background:#ababab;"></div>
<div class="t" style="left:3.78px;top:270.39px;font-size:12.30px;line-height:1;color:#262626;">6</div>
<div class="r" style="left:0.00px;top:297.00px;width:19.00px;height:1.00px;background:#ababab;"></div>
<div class="t" style="left:3.78px;top:285.39px;font-size:12.30px;line-height:1;color:#262626;">7</div>
<div class="r" style="left:0.00px;top:312.00px;width:19.00px;height:1.00px;background:#ababab;"></div>
<div class="t" style="left:3.78px;top:300.39px;font-size:12.30px;line-height:1;color:#217346;">8</div>
<div class="r" style="left:0.00px;top:339.00px;width:19.00px;height:1.00px;background:#ababab;"></div>
<div class="t" style="left:3.78px;top:327.39px;font-size:12.30px;line-height:1;color:#217346;">9</div>
<div class="r" style="left:0.00px;top:366.00px;width:19.00px;height:1.00px;background:#ababab;"></div>
<div class="t" style="left:0.36px;top:354.39px;font-size:12.30px;line-height:1;color:#217346;">10</div>
<div class="r" style="left:0.00px;top:393.00px;width:19.00px;height:1.00px;background:#ababab;"></div>
<div class="t" style="left:0.82px;top:381.39px;font-size:12.30px;line-height:1;color:#217346;">11</div>
<div class="r" style="left:0.00px;top:408.00px;width:19.00px;height:1.00px;background:#ababab;"></div>
<div class="t" style="left:0.36px;top:396.39px;font-size:12.30px;line-height:1;color:#217346;">12</div>
<div class="r" style="left:0.00px;top:423.00px;width:19.00px;height:1.00px;background:#ababab;"></div>
<div class="t" style="left:0.36px;top:411.39px;font-size:12.30px;line-height:1;color:#262626;">13</div>
<div class="r" style="left:0.00px;top:438.00px;width:19.00px;height:1.00px;background:#ababab;"></div>
<div class="t" style="left:0.36px;top:426.39px;font-size:12.30px;line-height:1;color:#262626;">14</div>
<div class="r" style="left:0.00px;top:465.00px;width:19.00px;height:1.00px;background:#ababab;"></div>
<div class="t" style="left:0.36px;top:453.39px;font-size:12.30px;line-height:1;color:#262626;">15</div>
<div class="r" style="left:0.00px;top:480.00px;width:19.00px;height:1.00px;background:#ababab;"></div>
<div class="t" style="left:0.36px;top:468.39px;font-size:12.30px;line-height:1;color:#262626;">16</div>
<div class="r" style="left:0.00px;top:495.00px;width:19.00px;height:1.00px;background:#ababab;"></div>
<div class="t" style="left:0.36px;top:483.39px;font-size:12.30px;line-height:1;color:#262626;">17</div>
<div class="r" style="left:0.00px;top:510.00px;width:19.00px;height:1.00px;background:#ababab;"></div>
<div class="t" style="left:0.36px;top:498.39px;font-size:12.30px;line-height:1;color:#262626;">18</div>
<div class="r" style="left:0.00px;top:525.00px;width:19.00px;height:1.00px;background:#ababab;"></div>
<div class="t" style="left:0.36px;top:513.39px;font-size:12.30px;line-height:1;color:#262626;">19</div>
<div class="r" style="left:20.00px;top:207.00px;width:996.00px;height:1.00px;background:#d4d4d4;"></div>
<div class="r" style="left:20.00px;top:222.00px;width:996.00px;height:1.00px;background:#d4d4d4;"></div>
<div class="r" style="left:20.00px;top:237.00px;width:996.00px;height:1.00px;background:#d4d4d4;"></div>
<div class="r" style="left:20.00px;top:252.00px;width:996.00px;height:1.00px;background:#d4d4d4;"></div>
<div class="r" style="left:20.00px;top:267.00px;width:996.00px;height:1.00px;background:#d4d4d4;"></div>
<div class="r" style="left:20.00px;top:282.00px;width:996.00px;height:1.00px;background:#d4d4d4;"></div>
<div class="r" style="left:20.00px;top:297.00px;width:996.00px;height:1.00px;background:#d4d4d4;"></div>
<div class="r" style="left:20.00px;top:312.00px;width:996.00px;height:1.00px;background:#d4d4d4;"></div>
<div class="r" style="left:20.00px;top:339.00px;width:996.00px;height:1.00px;background:#d4d4d4;"></div>
<div class="r" style="left:20.00px;top:366.00px;width:996.00px;height:1.00px;background:#d4d4d4;"></div>
<div class="r" style="left:20.00px;top:393.00px;width:996.00px;height:1.00px;background:#d4d4d4;"></div>
<div class="r" style="left:20.00px;top:408.00px;width:996.00px;height:1.00px;background:#d4d4d4;"></div>
<div class="r" style="left:20.00px;top:423.00px;width:996.00px;height:1.00px;background:#d4d4d4;"></div>
<div class="r" style="left:20.00px;top:438.00px;width:996.00px;height:1.00px;background:#d4d4d4;"></div>
<div class="r" style="left:20.00px;top:465.00px;width:996.00px;height:1.00px;background:#d4d4d4;"></div>
<div class="r" style="left:20.00px;top:480.00px;width:996.00px;height:1.00px;background:#d4d4d4;"></div>
<div class="r" style="left:20.00px;top:495.00px;width:996.00px;height:1.00px;background:#d4d4d4;"></div>
<div class="r" style="left:20.00px;top:510.00px;width:996.00px;height:1.00px;background:#d4d4d4;"></div>
<div class="r" style="left:20.00px;top:525.00px;width:996.00px;height:1.00px;background:#d4d4d4;"></div>
<div class="r" style="left:77.00px;top:186.00px;width:1.00px;height:341.00px;background:#d4d4d4;"></div>
<div class="r" style="left:316.00px;top:186.00px;width:1.00px;height:341.00px;background:#d4d4d4;"></div>
<div class="r" style="left:377.00px;top:186.00px;width:1.00px;height:341.00px;background:#d4d4d4;"></div>
<div class="r" style="left:435.00px;top:186.00px;width:1.00px;height:341.00px;background:#d4d4d4;"></div>
<div class="r" style="left:517.00px;top:186.00px;width:1.00px;height:341.00px;background:#d4d4d4;"></div>
<div class="r" style="left:599.00px;top:186.00px;width:1.00px;height:341.00px;background:#d4d4d4;"></div>
<div class="r" style="left:675.00px;top:186.00px;width:1.00px;height:341.00px;background:#d4d4d4;"></div>
<div class="r" style="left:733.00px;top:186.00px;width:1.00px;height:341.00px;background:#d4d4d4;"></div>
<div class="r" style="left:791.00px;top:186.00px;width:1.00px;height:341.00px;background:#d4d4d4;"></div>
<div class="r" style="left:849.00px;top:186.00px;width:1.00px;height:341.00px;background:#d4d4d4;"></div>
<div class="r" style="left:907.00px;top:186.00px;width:1.00px;height:341.00px;background:#d4d4d4;"></div>
<div class="r" style="left:965.00px;top:186.00px;width:1.00px;height:341.00px;background:#d4d4d4;"></div>
<div class="r" style="left:20.00px;top:186.00px;width:713.00px;height:21.00px;background:#fff;"></div>
<div class="r" style="left:20.00px;top:208.00px;width:713.00px;height:14.00px;background:#fff;"></div>
<div class="r" style="left:20.00px;top:223.00px;width:713.00px;height:44.00px;background:#ffd966;"></div>
<div class="r" style="left:20.00px;top:268.00px;width:713.00px;height:14.00px;background:#bdd7ee;"></div>
<div class="r" style="left:20.00px;top:298.00px;width:713.00px;height:14.00px;background:#bdd7ee;"></div>
<div class="r" style="left:600.00px;top:313.00px;width:75.00px;height:95.00px;background:#c6c6c6;"></div>
<div class="r" style="left:20.00px;top:222.00px;width:714.00px;height:1.00px;background:#808080;"></div>
<div class="r" style="left:316.00px;top:237.00px;width:418.00px;height:1.00px;background:#808080;"></div>
<div class="r" style="left:20.00px;top:252.00px;width:714.00px;height:1.00px;background:#808080;"></div>
<div class="r" style="left:20.00px;top:267.00px;width:714.00px;height:1.00px;background:#808080;"></div>
<div class="r" style="left:20.00px;top:282.00px;width:714.00px;height:1.00px;background:#808080;"></div>
<div class="r" style="left:20.00px;top:297.00px;width:714.00px;height:1.00px;background:#808080;"></div>
<div class="r" style="left:20.00px;top:312.00px;width:714.00px;height:1.00px;background:#808080;"></div>
<div class="r" style="left:20.00px;top:339.00px;width:714.00px;height:1.00px;background:#808080;"></div>
<div class="r" style="left:20.00px;top:366.00px;width:714.00px;height:1.00px;background:#808080;"></div>
<div class="r" style="left:20.00px;top:393.00px;width:714.00px;height:1.00px;background:#808080;"></div>
<div class="r" style="left:20.00px;top:408.00px;width:714.00px;height:1.00px;background:#808080;"></div>
<div class="r" style="left:20.00px;top:423.00px;width:714.00px;height:1.00px;background:#808080;"></div>
<div class="r" style="left:20.00px;top:438.00px;width:714.00px;height:1.00px;background:#808080;"></div>
<div class="r" style="left:20.00px;top:465.00px;width:714.00px;height:1.00px;background:#808080;"></div>
<div class="r" style="left:20.00px;top:480.00px;width:714.00px;height:1.00px;background:#808080;"></div>
<div class="r" style="left:20.00px;top:495.00px;width:714.00px;height:1.00px;background:#808080;"></div>
<div class="r" style="left:20.00px;top:510.00px;width:714.00px;height:1.00px;background:#808080;"></div>
<div class="r" style="left:20.00px;top:525.00px;width:714.00px;height:1.00px;background:#808080;"></div>
<div class="r" style="left:77.00px;top:222.00px;width:1.00px;height:305.00px;background:#808080;"></div>
<div class="r" style="left:316.00px;top:222.00px;width:1.00px;height:305.00px;background:#808080;"></div>
<div class="r" style="left:377.00px;top:237.00px;width:1.00px;height:290.00px;background:#808080;"></div>
<div class="r" style="left:435.00px;top:222.00px;width:1.00px;height:305.00px;background:#808080;"></div>
<div class="r" style="left:517.00px;top:237.00px;width:1.00px;height:290.00px;background:#808080;"></div>
<div class="r" style="left:599.00px;top:222.00px;width:1.00px;height:305.00px;background:#808080;"></div>
<div class="r" style="left:675.00px;top:237.00px;width:1.00px;height:290.00px;background:#808080;"></div>
<div class="r" style="left:733.00px;top:222.00px;width:1.00px;height:305.00px;background:#808080;"></div>
<div class="r" style="left:19.00px;top:222.00px;width:1.00px;height:305.00px;background:#808080;"></div>
<div class="t" style="left:201.50px;top:188.72px;font-size:16.40px;line-height:1;color:#000;font-weight:bold;letter-spacing:-0.022px;">BẢNG CÂN ĐỐI PHÁT SINH CÁC TÀI KHOẢN</div>
<div class="t" style="left:261.00px;top:209.86px;font-size:10.80px;line-height:1;color:#000;letter-spacing:0.022px;">TỪ NGÀY: 01-01-2019 ĐẾN NGÀY: 31-12-2019</div>
<div class="t" style="left:39.96px;top:224.53px;font-size:10.60px;line-height:1;color:#000;font-weight:bold;">TÀI</div>
<div class="t" style="left:29.07px;top:238.53px;font-size:10.60px;line-height:1;color:#000;font-weight:bold;">KHOẢN</div>
<div class="t" style="left:156.50px;top:232.53px;font-size:10.60px;line-height:1;color:#000;font-weight:bold;letter-spacing:-0.156px;">TÊN TÀI KHOẢN</div>
<div class="t" style="left:345.99px;top:224.53px;font-size:10.60px;line-height:1;color:#000;font-weight:bold;">DƯ ĐẦU KỲ</div>
<div class="t" style="left:488.94px;top:224.53px;font-size:10.60px;line-height:1;color:#000;font-weight:bold;">PHÁT SINH</div>
<div class="t" style="left:634.72px;top:224.53px;font-size:10.60px;line-height:1;color:#000;font-weight:bold;">DƯ CUỐI KỲ</div>
<div class="t" style="left:338.65px;top:239.53px;font-size:10.60px;line-height:1;color:#000;font-weight:bold;">NỢ</div>
<div class="t" style="left:398.55px;top:239.53px;font-size:10.60px;line-height:1;color:#000;font-weight:bold;">CÓ</div>
<div class="t" style="left:468.15px;top:239.53px;font-size:10.60px;line-height:1;color:#000;font-weight:bold;">NỢ</div>
<div class="t" style="left:550.55px;top:239.53px;font-size:10.60px;line-height:1;color:#000;font-weight:bold;">CÓ</div>
<div class="t" style="left:629.15px;top:239.53px;font-size:10.60px;line-height:1;color:#000;font-weight:bold;">NỢ</div>
<div class="t" style="left:696.55px;top:239.53px;font-size:10.60px;line-height:1;color:#000;font-weight:bold;">CÓ</div>
<div class="t" style="left:44.67px;top:254.53px;font-size:10.60px;line-height:1;color:#000;font-weight:bold;">A</div>
<div class="t" style="left:193.17px;top:254.53px;font-size:10.60px;line-height:1;color:#000;font-weight:bold;">B</div>
<div class="t" style="left:344.05px;top:254.53px;font-size:10.60px;line-height:1;color:#000;font-weight:bold;">1</div>
<div class="t" style="left:403.55px;top:254.53px;font-size:10.60px;line-height:1;color:#000;font-weight:bold;">2</div>
<div class="t" style="left:473.55px;top:254.53px;font-size:10.60px;line-height:1;color:#000;font-weight:bold;">3</div>
<div class="t" style="left:555.55px;top:254.53px;font-size:10.60px;line-height:1;color:#000;font-weight:bold;">4</div>
<div class="t" style="left:634.55px;top:254.53px;font-size:10.60px;line-height:1;color:#000;font-weight:bold;">5</div>
<div class="t" style="left:701.55px;top:254.53px;font-size:10.60px;line-height:1;color:#000;font-weight:bold;">6</div>
<div class="t" style="left:22.50px;top:269.50px;font-size:10.75px;line-height:1;color:#000;letter-spacing:0.500px;">111</div>
<div class="t" style="left:80.00px;top:269.50px;font-size:10.75px;line-height:1;color:#000;letter-spacing:-0.155px;">Tiền mặt</div>
<div class="t" style="left:321.20px;top:269.50px;font-size:10.75px;line-height:1;color:#000;">15.434.483</div>
<div class="t" style="left:440.28px;top:269.50px;font-size:10.75px;line-height:1;color:#000;">32.045.790.449</div>
<div class="t" style="left:522.28px;top:269.50px;font-size:10.75px;line-height:1;color:#000;">30.675.337.132</div>
<div class="t" style="left:604.26px;top:269.50px;font-size:10.75px;line-height:1;color:#000;">1.385.887.800</div>
<svg class="r" style="left:20.00px;top:268.00px;" width="5" height="5" viewBox="0 0 5 5"><path d="M0 0H5L0 5Z" fill="#107c10"/></svg>
<div class="t" style="left:22.50px;top:284.50px;font-size:10.75px;line-height:1;color:#000;letter-spacing:0.500px;">1111</div>
<div class="t" style="left:80.00px;top:284.50px;font-size:10.75px;line-height:1;color:#000;letter-spacing:-0.168px;">Tiền mặt VND</div>
<div class="t" style="left:321.20px;top:284.50px;font-size:10.75px;line-height:1;color:#000;">15.434.483</div>
<div class="t" style="left:440.28px;top:284.50px;font-size:10.75px;line-height:1;color:#000;">32.045.790.449</div>
<div class="t" style="left:522.28px;top:284.50px;font-size:10.75px;line-height:1;color:#000;">30.675.337.132</div>
<div class="t" style="left:604.26px;top:284.50px;font-size:10.75px;line-height:1;color:#000;">1.385.887.800</div>
<svg class="r" style="left:20.00px;top:283.00px;" width="5" height="5" viewBox="0 0 5 5"><path d="M0 0H5L0 5Z" fill="#107c10"/></svg>
<div class="t" style="left:22.50px;top:299.50px;font-size:10.75px;line-height:1;color:#000;letter-spacing:0.333px;">112</div>
<div class="t" style="left:80.00px;top:299.50px;font-size:10.75px;line-height:1;color:#000;letter-spacing:-0.092px;">Tiền gửi ngân hàng</div>
<div class="t" style="left:327.18px;top:299.50px;font-size:10.75px;line-height:1;color:#000;">6.540.602</div>
<div class="t" style="left:441.08px;top:299.50px;font-size:10.75px;line-height:1;color:#000;">73.714.161.811</div>
<div class="t" style="left:522.28px;top:299.50px;font-size:10.75px;line-height:1;color:#000;">73.675.365.807</div>
<div class="t" style="left:619.20px;top:299.50px;font-size:10.75px;line-height:1;color:#000;">55.744.606</div>
<svg class="r" style="left:20.00px;top:298.00px;" width="5" height="5" viewBox="0 0 5 5"><path d="M0 0H5L0 5Z" fill="#107c10"/></svg>
<div class="t" style="left:22.50px;top:320.50px;font-size:10.75px;line-height:1;color:#000;letter-spacing:0.300px;">11210</div>
<div class="t" style="left:80.00px;top:315.10px;font-size:10.75px;line-height:1;color:#000;letter-spacing:-0.203px;">NH TMCP ĐT&amp;PT Việt Nam (BIDV) - chi nhánh</div>
<div class="t" style="left:80.00px;top:328.50px;font-size:10.75px;line-height:1;color:#000;letter-spacing:-0.290px;">Hoàng Mai - HN</div>
<div class="t" style="left:440.28px;top:320.50px;font-size:10.75px;line-height:1;color:#000;">67.609.733.879</div>
<div class="t" style="left:522.28px;top:320.50px;font-size:10.75px;line-height:1;color:#000;">67.569.714.550</div>
<div class="t" style="left:619.20px;top:320.50px;font-size:10.75px;line-height:1;color:#000;">40.019.329</div>
<svg class="r" style="left:20.00px;top:313.00px;" width="5" height="5" viewBox="0 0 5 5"><path d="M0 0H5L0 5Z" fill="#107c10"/></svg>
<div class="t" style="left:22.50px;top:347.50px;font-size:10.75px;line-height:1;color:#000;letter-spacing:0.400px;">11211</div>
<div class="t" style="left:80.00px;top:342.10px;font-size:10.75px;line-height:1;color:#000;letter-spacing:-0.167px;">Ngân hàng TMCP Quân Đội (MB) - CN Mỹ Đình</div>
<div class="t" style="left:80.00px;top:355.50px;font-size:10.75px;line-height:1;color:#000;letter-spacing:0.111px;">(TK: 0111103948009)</div>
<div class="t" style="left:461.20px;top:347.50px;font-size:10.75px;line-height:1;color:#000;">92.002.388</div>
<div class="t" style="left:543.20px;top:347.50px;font-size:10.75px;line-height:1;color:#000;">90.467.500</div>
<div class="t" style="left:625.18px;top:347.50px;font-size:10.75px;line-height:1;color:#000;">1.534.888</div>
<svg class="r" style="left:20.00px;top:340.00px;" width="5" height="5" viewBox="0 0 5 5"><path d="M0 0H5L0 5Z" fill="#107c10"/></svg>
<div class="t" style="left:22.50px;top:374.50px;font-size:10.75px;line-height:1;color:#000;letter-spacing:0.300px;">11212</div>
<div class="t" style="left:80.00px;top:369.10px;font-size:10.75px;line-height:1;color:#000;letter-spacing:-0.212px;">Ngân hàng TMCP Sài Gòn - Hà Nội - CN Hải</div>
<div class="t" style="left:80.00px;top:382.50px;font-size:10.75px;line-height:1;color:#000;letter-spacing:-0.176px;">Phòng (SHB)</div>
<div class="t" style="left:446.26px;top:374.50px;font-size:10.75px;line-height:1;color:#000;">6.006.004.389</div>
<div class="t" style="left:528.26px;top:374.50px;font-size:10.75px;line-height:1;color:#000;">6.002.222.000</div>
<div class="t" style="left:625.18px;top:374.50px;font-size:10.75px;line-height:1;color:#000;">3.782.389</div>
<svg class="r" style="left:20.00px;top:367.00px;" width="5" height="5" viewBox="0 0 5 5"><path d="M0 0H5L0 5Z" fill="#107c10"/></svg>
<div class="t" style="left:22.50px;top:395.50px;font-size:10.75px;line-height:1;color:#000;letter-spacing:0.300px;">11213</div>
<div class="t" style="left:80.00px;top:395.50px;font-size:10.75px;line-height:1;color:#000;letter-spacing:-0.144px;">Ngân hàng TMCP Việt Á</div>
<div class="t" style="left:327.18px;top:395.50px;font-size:10.75px;line-height:1;color:#000;">1.091.421</div>
<div class="t" style="left:467.98px;top:395.50px;font-size:10.75px;line-height:1;color:#000;">4.112.750</div>
<div class="t" style="left:549.18px;top:395.50px;font-size:10.75px;line-height:1;color:#000;">5.204.171</div>
<div class="t" style="left:619.20px;top:395.50px;font-size:10.75px;line-height:1;color:#000;">10.408.000</div>
<svg class="r" style="left:20.00px;top:394.00px;" width="5" height="5" viewBox="0 0 5 5"><path d="M0 0H5L0 5Z" fill="#107c10"/></svg>
<div class="t" style="left:22.50px;top:410.50px;font-size:10.75px;line-height:1;color:#000;letter-spacing:0.300px;">11214</div>
<div class="t" style="left:80.00px;top:410.50px;font-size:10.75px;line-height:1;color:#000;letter-spacing:-0.219px;">Ngân hàng NN&amp;PTNT - Chi nhánh Hải Châu</div>
<div class="t" style="left:327.18px;top:410.50px;font-size:10.75px;line-height:1;color:#000;">1.635.047</div>
<div class="t" style="left:488.10px;top:410.50px;font-size:10.75px;line-height:1;color:#000;">1.047</div>
<div class="t" style="left:549.18px;top:410.50px;font-size:10.75px;line-height:1;color:#000;">1.636.094</div>
<svg class="r" style="left:20.00px;top:409.00px;" width="5" height="5" viewBox="0 0 5 5"><path d="M0 0H5L0 5Z" fill="#107c10"/></svg>
<div class="t" style="left:22.50px;top:425.50px;font-size:10.75px;line-height:1;color:#000;letter-spacing:0.300px;">11215</div>
<div class="t" style="left:80.00px;top:425.50px;font-size:10.75px;line-height:1;color:#000;letter-spacing:-0.073px;">Ngân hàng liên doanh Việt Nga</div>
<div class="t" style="left:348.10px;top:425.50px;font-size:10.75px;line-height:1;color:#000;">2.629</div>
<div class="t" style="left:467.18px;top:425.50px;font-size:10.75px;line-height:1;color:#000;">2.300.008</div>
<div class="t" style="left:549.18px;top:425.50px;font-size:10.75px;line-height:1;color:#000;">2.302.637</div>
<svg class="r" style="left:20.00px;top:424.00px;" width="5" height="5" viewBox="0 0 5 5"><path d="M0 0H5L0 5Z" fill="#107c10"/></svg>
<div class="t" style="left:22.50px;top:446.50px;font-size:10.75px;line-height:1;color:#000;letter-spacing:0.300px;">11216</div>
<div class="t" style="left:80.00px;top:441.10px;font-size:10.75px;line-height:1;color:#000;letter-spacing:-0.114px;">Ngân hàng Hàng Hải Việt Nam - Cty CP chứng</div>
<div class="t" style="left:80.00px;top:454.50px;font-size:10.75px;line-height:1;color:#000;letter-spacing:-0.437px;">khoán VNDIRECT</div>
<div class="t" style="left:336.15px;top:446.50px;font-size:10.75px;line-height:1;color:#000;">850.000</div>
<div class="t" style="left:488.10px;top:446.50px;font-size:10.75px;line-height:1;color:#000;">1.924</div>
<div class="t" style="left:558.15px;top:446.50px;font-size:10.75px;line-height:1;color:#000;">851.924</div>
<svg class="r" style="left:20.00px;top:439.00px;" width="5" height="5" viewBox="0 0 5 5"><path d="M0 0H5L0 5Z" fill="#107c10"/></svg>
<div class="t" style="left:22.50px;top:467.50px;font-size:10.75px;line-height:1;color:#000;letter-spacing:0.300px;">11217</div>
<div class="t" style="left:80.00px;top:467.50px;font-size:10.75px;line-height:1;color:#000;letter-spacing:-0.115px;">Ngân hàng TP Bank - Đà Nẵng</div>
<div class="t" style="left:336.15px;top:467.50px;font-size:10.75px;line-height:1;color:#000;">450.850</div>
<div class="t" style="left:497.07px;top:467.50px;font-size:10.75px;line-height:1;color:#000;">276</div>
<div class="t" style="left:558.15px;top:467.50px;font-size:10.75px;line-height:1;color:#000;">451.126</div>
<svg class="r" style="left:20.00px;top:466.00px;" width="5" height="5" viewBox="0 0 5 5"><path d="M0 0H5L0 5Z" fill="#107c10"/></svg>
<div class="t" style="left:22.50px;top:482.50px;font-size:10.75px;line-height:1;color:#000;letter-spacing:0.300px;">11218</div>
<div class="t" style="left:80.00px;top:482.50px;font-size:10.75px;line-height:1;color:#000;letter-spacing:-0.065px;">Ngân hàng Quốc Dân - Chi nhánh Đà Nẵng</div>
<div class="t" style="left:327.18px;top:482.50px;font-size:10.75px;line-height:1;color:#000;">1.413.603</div>
<div class="t" style="left:488.10px;top:482.50px;font-size:10.75px;line-height:1;color:#000;">4.353</div>
<div class="t" style="left:549.18px;top:482.50px;font-size:10.75px;line-height:1;color:#000;">1.417.956</div>
<svg class="r" style="left:20.00px;top:481.00px;" width="5" height="5" viewBox="0 0 5 5"><path d="M0 0H5L0 5Z" fill="#107c10"/></svg>
<div class="t" style="left:22.50px;top:497.50px;font-size:10.75px;line-height:1;color:#000;letter-spacing:0.300px;">11219</div>
<div class="t" style="left:80.00px;top:497.50px;font-size:10.75px;line-height:1;color:#000;letter-spacing:-0.201px;">Ngân hàng TMCP Hàng Hải Việt Nam</div>
<div class="t" style="left:336.15px;top:497.50px;font-size:10.75px;line-height:1;color:#000;">634.998</div>
<div class="t" style="left:497.07px;top:497.50px;font-size:10.75px;line-height:1;color:#000;">418</div>
<div class="t" style="left:558.15px;top:497.50px;font-size:10.75px;line-height:1;color:#000;">635.416</div>
<svg class="r" style="left:20.00px;top:496.00px;" width="5" height="5" viewBox="0 0 5 5"><path d="M0 0H5L0 5Z" fill="#107c10"/></svg>
<div class="t" style="left:22.50px;top:512.50px;font-size:10.75px;line-height:1;color:#000;letter-spacing:0.300px;">1121A</div>
<div class="t" style="left:80.00px;top:512.50px;font-size:10.75px;line-height:1;color:#000;letter-spacing:-0.197px;">Ngân hàng TMCP ĐT&amp;PT Việt Nam (BIDV)</div>
<div class="t" style="left:336.15px;top:512.50px;font-size:10.75px;line-height:1;color:#000;">462.054</div>
<div class="t" style="left:497.07px;top:512.50px;font-size:10.75px;line-height:1;color:#000;">379</div>
<div class="t" style="left:558.15px;top:512.50px;font-size:10.75px;line-height:1;color:#000;">462.433</div>
<svg class="r" style="left:317.00px;top:298.00px;" width="5" height="5" viewBox="0 0 5 5"><path d="M0 0H5L0 5Z" fill="#107c10"/></svg>
<svg class="r" style="left:436.00px;top:298.00px;" width="5" height="5" viewBox="0 0 5 5"><path d="M0 0H5L0 5Z" fill="#107c10"/></svg>
<svg class="r" style="left:518.00px;top:298.00px;" width="5" height="5" viewBox="0 0 5 5"><path d="M0 0H5L0 5Z" fill="#107c10"/></svg>
<div class="r" style="left:598.00px;top:296.00px;width:78.00px;height:113.00px;background:transparent;box-sizing:border-box;border:2px solid #217346;"></div>
<div class="r" style="left:600.00px;top:298.00px;width:74.00px;height:109.00px;background:transparent;box-sizing:border-box;border:1px solid #fff;"></div>
<div class="r" style="left:18.00px;top:297.00px;width:2.00px;height:112.00px;background:#217346;"></div>
<div class="r" style="left:650.00px;top:203.00px;width:262.00px;height:55.50px;background:#fff;box-sizing:border-box;border:1px solid #c8c8c8;box-shadow:0 1px 3px rgba(0,0,0,.15);"></div>
<div class="r" style="left:654.00px;top:207.00px;width:64.00px;height:23.50px;background:#fff;box-sizing:border-box;border:1px solid #c6c6c6;"></div>
<div class="r" style="left:717.00px;top:207.00px;width:47.00px;height:23.50px;background:#fff;box-sizing:border-box;border:1px solid #c6c6c6;"></div>
<div class="t" style="left:657.50px;top:211.84px;font-size:12.00px;line-height:1;color:#444;letter-spacing:-0.101px;">Arial</div>
<div class="t" style="left:721.20px;top:211.84px;font-size:12.00px;line-height:1;color:#444;letter-spacing:-1.173px;">10</div>
<svg class="r" style="left:707.75px;top:217.00px;" width="5.5" height="3" viewBox="0 0 5.5 3"><path d="M0 0H5.5 L2.75 3Z" fill="#666"/></svg>
<svg class="r" style="left:753.55px;top:217.00px;" width="5.5" height="3" viewBox="0 0 5.5 3"><path d="M0 0H5.5 L2.75 3Z" fill="#666"/></svg>
<div class="t" style="left:770.20px;top:212.88px;font-size:14.20px;line-height:1;color:#444;">A</div>
<svg class="r" style="left:777.80px;top:211.90px;" width="5.4" height="3.2" viewBox="0 0 5.4 3.2"><path d="M0 3.2L2.7 0L5.4 3.2z" fill="#3b7dc4"/></svg>
<div class="t" style="left:793.20px;top:215.08px;font-size:11.60px;line-height:1;color:#444;">A</div>
<svg class="r" style="left:799.80px;top:211.90px;" width="5.4" height="3.2" viewBox="0 0 5.4 3.2"><path d="M0 0H5.4L2.7 3.2z" fill="#3b7dc4"/></svg>
<svg class="r" style="left:811.00px;top:210.50px;" width="17" height="17" viewBox="0 0 17 17"><rect x="0.5" y="0.8" width="15.6" height="8.6" fill="#3b7dc4"/><path d="M2.2 2.6c2 .9 4 .9 6 0s4-.9 6 0v5c-2-.9-4-.9-6 0s-4 .9-6 0z" fill="#fff"/><circle cx="8.2" cy="5.1" r="2" fill="#3b7dc4"/>
<g fill="#eac282" stroke="#fff" stroke-width=".5"><ellipse cx="12.2" cy="11.6" rx="3.6" ry="1.5"/><ellipse cx="12.2" cy="9.6" rx="3.6" ry="1.5"/><ellipse cx="12.2" cy="7.6" rx="3.6" ry="1.5"/><ellipse cx="7.6" cy="14.8" rx="3.6" ry="1.5"/><ellipse cx="7.6" cy="12.8" rx="3.6" ry="1.5"/></g></svg>
<svg class="r" style="left:832.75px;top:217.00px;" width="5.5" height="3" viewBox="0 0 5.5 3"><path d="M0 0H5.5 L2.75 3Z" fill="#666"/></svg>
<div class="t" style="left:847.20px;top:211.88px;font-size:15.50px;line-height:1;color:#444;">%</div>
<div class="t" style="left:872.00px;top:201.27px;font-size:20.00px;line-height:1;color:#444;font-weight:bold;">,</div>
<svg class="r" style="left:889.00px;top:211.00px;" width="15" height="15" viewBox="0 0 15 15"><rect x="0.5" y="0.5" width="14" height="14" fill="#fff" stroke="#6a6a6a"/><path d="M0.5 4.5H14.5M0.5 10.5H14.5M7.5 0.5V4.5M7.5 10.5V14.5" stroke="#6a6a6a"/><path d="M3 7.5H12M4.6 5.8L2.8 7.5L4.6 9.2M10.4 5.8L12.2 7.5L10.4 9.2" stroke="#3b7dc4" stroke-width="1" fill="none"/></svg>
<div class="t" style="left:660.50px;top:237.44px;font-size:12.00px;line-height:1;color:#444;font-weight:bold;">B</div>
<div class="t" style="left:683.00px;top:235.75px;font-size:14.00px;line-height:1;color:#444;font-weight:bold;font-style:italic;font-family:'Liberation Serif',serif;">I</div>
<svg class="r" style="left:702.00px;top:238.00px;" width="14" height="12" viewBox="0 0 14 12"><rect x="0" y="0" width="14" height="1" fill="#6e6e6e"/><rect x="2" y="3" width="10" height="1" fill="#6e6e6e"/><rect x="0" y="6" width="14" height="1" fill="#6e6e6e"/><rect x="2" y="9" width="10" height="1" fill="#6e6e6e"/></svg>
<svg class="r" style="left:723.00px;top:233.50px;" width="17" height="17" viewBox="0 0 17 17"><path d="M6.4 3.4L12.2 8.2L7.2 12.2L1.6 7.4z" fill="#fff" stroke="#5f5f5f" stroke-width="1.1"/>
<path d="M5.6 5.6V1.8a1.1 1.1 0 0 1 1.1-1.1h.8a1.1 1.1 0 0 1 1.1 1.1v3.2" fill="none" stroke="#5f5f5f" stroke-width="1"/>
<path d="M11.6 5.4c2.6.2 4.3 2 3.9 5.2c-1-1.2-2-1.8-3.3-2z" fill="#3b7dc4"/>
<rect x="0" y="13" width="16" height="4" fill="#ffff00"/></svg>
<svg class="r" style="left:745.05px;top:241.00px;" width="5.5" height="3" viewBox="0 0 5.5 3"><path d="M0 0H5.5 L2.75 3Z" fill="#666"/></svg>
<div class="t" style="left:760.20px;top:234.28px;font-size:14.20px;line-height:1;color:#444;">A</div>
<div class="r" style="left:757.00px;top:246.50px;width:16.00px;height:4.00px;background:#ff0000;"></div>
<svg class="r" style="left:778.55px;top:241.00px;" width="5.5" height="3" viewBox="0 0 5.5 3"><path d="M0 0H5.5 L2.75 3Z" fill="#666"/></svg>
<svg class="r" style="left:792.00px;top:236.00px;" width="14" height="14" viewBox="0 0 14 14"><path d="M0 0.5H13M0 6.5H13M0.5 0V12M6.5 0V12M12.5 0V12" stroke="#7a7a7a" stroke-width="1" stroke-dasharray="1 1"/><path d="M0 12.8H13" stroke="#5a5a5a" stroke-width="1.2"/></svg>
<svg class="r" style="left:812.75px;top:241.00px;" width="5.5" height="3" viewBox="0 0 5.5 3"><path d="M0 0H5.5 L2.75 3Z" fill="#666"/></svg>
<svg class="r" style="left:824.00px;top:235.50px;" width="16" height="15" viewBox="0 0 16 15"><path d="M6.5 3.5H1M3.2 1.2L0.8 3.5L3.2 5.8" stroke="#3b7dc4" stroke-width="1.3" fill="none"/><text x="7" y="6.5" font-size="8.3" fill="#444" font-family="Liberation Sans">.0</text><text x="2.5" y="13.8" font-size="8.3" fill="#444" font-family="Liberation Sans">.00</text></svg>
<svg class="r" style="left:846.00px;top:235.50px;" width="16" height="15" viewBox="0 0 16 15"><path d="M1 11H6.5M4.3 8.7L6.7 11L4.3 13.3" stroke="#3b7dc4" stroke-width="1.3" fill="none"/><text x="3" y="6.5" font-size="8.3" fill="#444" font-family="Liberation Sans">.00</text><text x="8" y="13.8" font-size="8.3" fill="#444" font-family="Liberation Sans">.0</text></svg>
<svg class="r" style="left:869.00px;top:235.00px;" width="17" height="15" viewBox="0 0 17 15"><path d="M12.6 .6L16.6 2.4L16.2 3.8L12.6 7.6L9.4 4.4z" fill="#595959"/>
<path d="M8.6 3.6L12.8 8L11.4 9.4L7.2 5z" fill="#7e7e7e"/>
<path d="M7 5L11.2 9.4L6.7 14.4L0.2 7.7z" fill="#eac282"/></svg>
<div class="r" style="left:650.00px;top:274.20px;width:204.00px;height:260.00px;background:#fff;box-sizing:border-box;border:1px solid #c6c6c6;box-shadow:1px 1px 3px rgba(0,0,0,.2);"></div>
<div class="r" style="left:652.00px;top:275.60px;width:200.00px;height:24.00px;background:#c6c6c6;"></div>
<svg class="r" style="left:656.50px;top:279.50px;" width="15.5" height="16" viewBox="0 0 15.5 16"><path d="M2.3 .5H4.9L8.6 6.6L10.9 10.1L9.6 10.9L7 7.6z" fill="#6b6b6b"/><path d="M13.2 .5H10.6L6.9 6.6L4.6 10.1L5.9 10.9L8.5 7.6z" fill="#6b6b6b"/>
<circle cx="3.8" cy="12.4" r="2.4" fill="none" stroke="#3b7dc4" stroke-width="1.1"/><circle cx="11.7" cy="12.4" r="2.4" fill="none" stroke="#3b7dc4" stroke-width="1.1"/></svg>
<div class="t" style="left:683.00px;top:281.40px;font-size:11.70px;line-height:1;color:#444;letter-spacing:-0.069px;">Cu<u>t</u></div>
<svg class="r" style="left:656.00px;top:303.50px;" width="16" height="15" viewBox="0 0 16 15"><path d="M0.5 0.5h5.6l2.4 2.4v7.6h-8z" fill="#fff" stroke="#6a6a6a" stroke-width="1"/>
<path d="M2 3.5h3M2 5.5h3.5M2 7.5h3.5" stroke="#3b7dc4" stroke-width="1"/>
<path d="M6.5 3.5h5.6l2.9 2.9v8.1h-8.5z" fill="#fff" stroke="#6a6a6a" stroke-width="1"/><path d="M12.1 3.5v2.9h2.9" fill="none" stroke="#6a6a6a" stroke-width="1"/>
<path d="M8.5 8.5h4.5M8.5 10.5h4.5M8.5 12.5h4.5" stroke="#3b7dc4" stroke-width="1"/></svg>
<div class="t" style="left:683.00px;top:305.70px;font-size:11.70px;line-height:1;color:#444;letter-spacing:0.047px;"><u>C</u>opy</div>
<div class="r" style="left:676.00px;top:324.00px;width:176.50px;height:21.50px;background:#e8e8e8;"></div>
<svg class="r" style="left:657.00px;top:326.50px;" width="15.5" height="16.5" viewBox="0 0 15.5 16.5"><rect x="0.5" y="2" width="10.5" height="13" rx="1" fill="#eac282"/><path d="M3 3.6V1.6h1.6V.6h2.4v1h1.6v2z" fill="#6f6f6f"/>
<path d="M7 7.5h4.6l2.9 2.9v5.6H7z" fill="#fff" stroke="#6a6a6a" stroke-width="1"/></svg>
<div class="t" style="left:685.30px;top:328.50px;font-size:11.70px;line-height:1;color:#50565e;font-weight:bold;letter-spacing:-0.111px;">Paste Options:</div>
<svg class="r" style="left:682.00px;top:350.00px;" width="23" height="23" viewBox="0 0 23 23"><rect x="0.3" y="2.6" width="18" height="19.2" rx="1.6" fill="#eac282"/>
<path d="M4.6 5.4V3.4a.8.8 0 0 1 .8-.8h1.8a2.1 2.1 0 0 1 4.2 0h1.8a.8.8 0 0 1 .8.8v2z" fill="#666"/><circle cx="9.3" cy="2.5" r=".8" fill="#f4f4f4"/>
<rect x="2.6" y="5.8" width="13.4" height="13.8" fill="#fff"/><path d="M4 7.5H13" stroke="#3b7dc4" stroke-width="1"/><rect x="4" y="9.2" width="9" height="3" fill="#f3c4c0"/><path d="M4 9.7H13M4 10.7H13M4 11.7H13" stroke="#d8392b" stroke-width=".8" stroke-dasharray=".9 .7"/><path d="M4 14.5H10" stroke="#3b7dc4" stroke-width="1"/><path d="M4 17H7" stroke="#b8b8b8" stroke-width="1"/><path d="M19.2 6L21.4 7.4L21 11.6L16.8 15.6L14.6 13.4z" fill="#5f5f5f" stroke="#fff" stroke-width=".8" paint-order="stroke"/><path d="M14.6 13.4L16.8 15.6L15.6 16.8L13.4 14.6z" fill="#a0a0a0"/><path d="M13.4 14.6L15.6 16.8C15.2 20.6 9.5 22.2 3.6 22.4C7.6 20.4 8.2 16.2 13.4 14.6z" fill="#3b7dc4" stroke="#fff" stroke-width=".8" paint-order="stroke"/><ellipse cx="11.4" cy="18.8" rx="2" ry="1.1" transform="rotate(-38 11.4 18.8)" fill="#cfe0f3"/></svg>
<svg class="r" style="left:712.00px;top:350.00px;" width="23" height="23" viewBox="0 0 23 23"><rect x="0.3" y="2.6" width="18" height="19.2" rx="1.6" fill="#eac282"/>
<path d="M4.6 5.4V3.4a.8.8 0 0 1 .8-.8h1.8a2.1 2.1 0 0 1 4.2 0h1.8a.8.8 0 0 1 .8.8v2z" fill="#666"/><circle cx="9.3" cy="2.5" r=".8" fill="#f4f4f4"/>
<rect x="2.6" y="5.8" width="13.4" height="13.8" fill="#fff"/><path d="M4 7.5H14.6M4 10.5H14.6M4 13.5H14.6M4 16.5H14.6" stroke="#3b7dc4" stroke-width="1.1"/></svg>
<div class="t" style="left:683.00px;top:381.50px;font-size:11.70px;line-height:1;color:#444;letter-spacing:-0.299px;">Paste <u>S</u>pecial...</div>
<div class="r" style="left:684.00px;top:400.00px;width:168.50px;height:1.00px;background:#e1e1e1;"></div>
<svg class="r" style="left:656.00px;top:406.00px;" width="16" height="17" viewBox="0 0 16 17"><circle cx="9.6" cy="6.4" r="5.4" fill="#fff" stroke="#3b7dc4" stroke-width="1.7"/><path d="M5.6 10.6L1 15.4" stroke="#3b7dc4" stroke-width="2.3" stroke-linecap="round"/>
<circle cx="9.6" cy="3.9" r="1" fill="#555"/><path d="M9.6 5.8V9.6M8.5 5.9H9.7M8.4 9.5H10.8" stroke="#555" stroke-width="1.2"/></svg>
<div class="t" style="left:683.00px;top:407.50px;font-size:11.70px;line-height:1;color:#444;letter-spacing:0.055px;">Smart <u>L</u>ookup</div>
<div class="r" style="left:684.00px;top:426.00px;width:168.50px;height:1.00px;background:#e1e1e1;"></div>
<div class="t" style="left:683.00px;top:434.10px;font-size:11.70px;line-height:1;color:#444;letter-spacing:-0.168px;"><u>I</u>nsert...</div>
<div class="t" style="left:683.00px;top:458.10px;font-size:11.70px;line-height:1;color:#444;letter-spacing:-0.230px;"><u>D</u>elete...</div>
<div class="t" style="left:683.00px;top:482.10px;font-size:11.70px;line-height:1;color:#444;letter-spacing:-0.038px;">Clear Co<u>n</u>tents</div>
<div class="r" style="left:684.00px;top:500.00px;width:168.50px;height:1.00px;background:#e1e1e1;"></div>
<svg class="r" style="left:656.00px;top:505.00px;" width="16" height="17" viewBox="0 0 16 17"><rect x="5.5" y="3.5" width="9.5" height="11.5" fill="#fff" stroke="#666"/><path d="M7.5 7H13" stroke="#d8392b" stroke-width="1.3"/><path d="M7.5 9.8H11.5" stroke="#3a9a5a" stroke-width="1.3"/><path d="M7.5 12.5H13" stroke="#3b7dc4" stroke-width="1.3"/>
<path d="M4.2 0L0.6 6.8H3.2L1.2 12.6L7.4 5H4.4L7 0z" fill="#edb35c" stroke="#fff" stroke-width=".6" paint-order="stroke"/></svg>
<div class="t" style="left:683.00px;top:507.60px;font-size:11.70px;line-height:1;color:#444;letter-spacing:0.030px;"><u>Q</u>uick Analysis</div>
<div class="r" style="left:645.20px;top:267.20px;width:214.30px;height:39.40px;background:transparent;box-sizing:border-box;border:5px solid #e81e26;"></div>
</body></html>
